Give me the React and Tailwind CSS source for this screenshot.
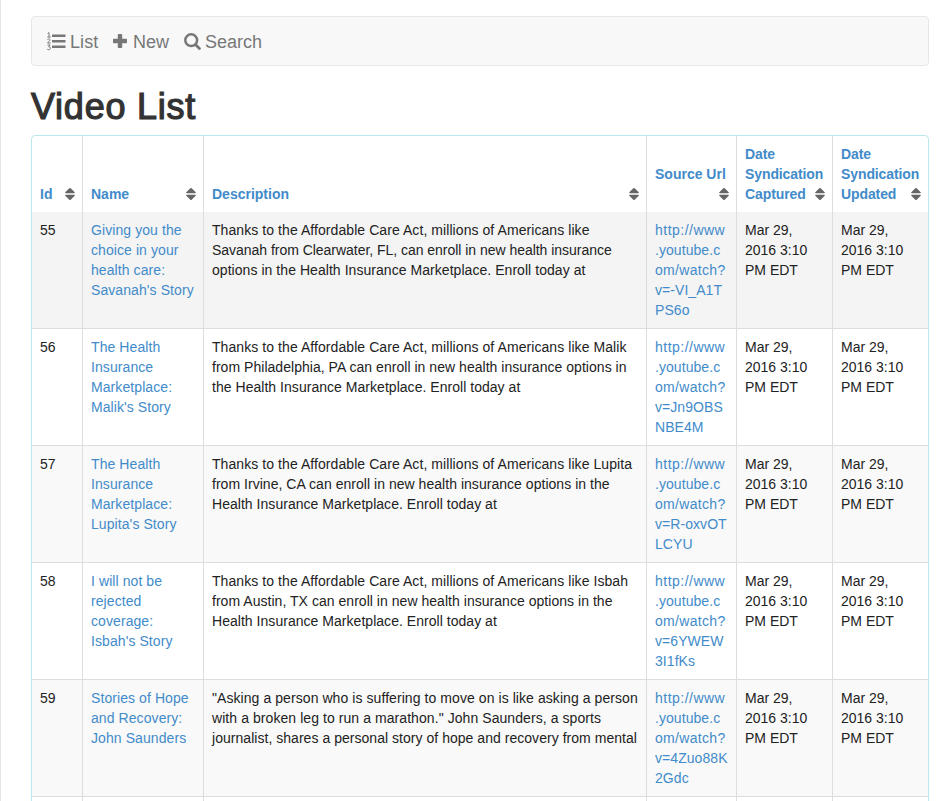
import React from "react";

const THANKS = "Thanks to the Affordable Care Act, millions of Americans like";

const columns = [
  { lines: ["Id"] },
  { lines: ["Name"] },
  { lines: ["Description"] },
  { lines: ["Source Url", "\u00a0"] },
  { lines: ["Date", "Syndication", "Captured"], tight: true },
  { lines: ["Date", "Syndication", "Updated"], tight: true },
];

const wide = "tracking-[0.07px]";
const normal = "tracking-[0.035px]";
const tight = "tracking-[-0.03px]";

const rows = [
  {
    id: "55",
    name: ["Giving you the", "choice in your", "health care:", "Savanah's Story"],
    description: [
      [THANKS, wide],
      ["Savanah from Clearwater, FL, can enroll in new health insurance", tight],
      ["options in the Health Insurance Marketplace. Enroll today at", "tracking-[0.05px]"],
    ],
    url: [".youtube.c", "om/watch?", "v=-VI_A1T", "PS6o"],
    bg: "bg-[#f4f4f4]",
  },
  {
    id: "56",
    name: ["The Health", "Insurance", "Marketplace:", "Malik's Story"],
    description: [
      [THANKS + " Malik", wide],
      ["from Philadelphia, PA can enroll in new health insurance options in", normal],
      ["the Health Insurance Marketplace. Enroll today at", normal],
    ],
    url: [".youtube.c", "om/watch?", "v=Jn9OBS", "NBE4M"],
    bg: "bg-white",
  },
  {
    id: "57",
    name: ["The Health", "Insurance", "Marketplace:", "Lupita's Story"],
    description: [
      [THANKS + " Lupita", wide],
      ["from Irvine, CA can enroll in new health insurance options in the", normal],
      ["Health Insurance Marketplace. Enroll today at", normal],
    ],
    url: [".youtube.c", "om/watch?", "v=R-oxvOT", "LCYU"],
    bg: "bg-[#f9f9f9]",
  },
  {
    id: "58",
    name: ["I will not be", "rejected", "coverage:", "Isbah's Story"],
    description: [
      [THANKS + " Isbah", wide],
      ["from Austin, TX can enroll in new health insurance options in the", normal],
      ["Health Insurance Marketplace. Enroll today at", normal],
    ],
    url: [".youtube.c", "om/watch?", "v=6YWEW", "3I1fKs"],
    bg: "bg-white",
  },
  {
    id: "59",
    name: ["Stories of Hope", "and Recovery:", "John Saunders"],
    description: [
      ["\"Asking a person who is suffering to move on is like asking a person", wide],
      ["with a broken leg to run a marathon.\" John Saunders, a sports", wide],
      ["journalist, shares a personal story of hope and recovery from mental", normal],
    ],
    url: [".youtube.c", "om/watch?", "v=4Zuo88K", "2Gdc"],
    bg: "bg-[#f9f9f9]",
  },
];

const date = ["Mar 29,", "2016 3:10", "PM EDT"];

const grid = "grid grid-cols-[51px_121px_443px_90px_96px_95px]";

function urlLines(url) {
  return [
    ["http://www", "tracking-[0.48px]"],
    ...url.map((line) => [line, line === "om/watch?" ? "tracking-[0.32px]" : "tracking-[0.06px]"]),
  ];
}

function ListIcon() {
  return (
    <svg className="block h-[19px] w-[19px]" viewBox="0 0 19 19" fill="#777">
      <path d="M5 2.500h13.500v2.500H5zM5 8h13.500v2.500H5zM5 13.500h13.500V16H5z" />
      <g fill="none" stroke="#777" strokeWidth="1">
        <path d="M.6 1.500 2 .6v4.400M.3 5h3.400" />
        <path d="M.4 7.500c1.100-1 3-.6 2.700.6C2.900 9.100.9 9.800.6 11h3" />
        <path d="M.5 13h2.600l-1.400 1.800c2.500-.1 2.200 3.100 0 2.900-.6 0-1.100-.2-1.500-.5" />
      </g>
    </svg>
  );
}

function PlusIcon() {
  return (
    <svg className="block h-[14px] w-[14px]" viewBox="0 0 14 14" fill="#777">
      <path d="M5.600 0h2.800q.8 0 .8.800v4h4q.8 0 .8.800v2.800q0 .8-.8.800h-4v4q0 .8-.8.800H5.600q-.8 0-.8-.8v-4h-4Q0 9.200 0 8.400V5.600q0-.8.800-.8h4v-4Q4.800 0 5.600 0z" />
    </svg>
  );
}

function SearchIcon() {
  return (
    <svg className="block h-[17px] w-[17px]" viewBox="0 0 17 17" fill="none" stroke="#777">
      <circle cx="7.200" cy="7.200" r="5.900" strokeWidth="2.500" />
      <path d="m11.700 11.700 3.700 3.700" strokeWidth="2.800" strokeLinecap="round" />
    </svg>
  );
}

function SortIcon() {
  return (
    <svg className="block h-[12px] w-[10px]" viewBox="0 0 10 12" fill="#666">
      <path d="M5.700.300 9.700 4.200Q10.200 5.200 9.200 5.300H.8Q-.2 5.200.3 4.200L4.300.300Q5-.2 5.700.300zM.8 6.700h8.400q1 .1.500 1.100L5.700 11.700q-.7.500-1.400 0L.3 7.800Q-.2 6.800.8 6.700z" />
    </svg>
  );
}

function Lines({ lines, className }) {
  return (
    <div className={className}>
      {lines.map((line, i) =>
        Array.isArray(line) ? (
          <div key={i} className={"whitespace-nowrap " + line[1]}>{line[0]}</div>
        ) : (
          <div key={i} className="whitespace-nowrap">{line}</div>
        )
      )}
    </div>
  );
}

function HeaderCell({ column, last }) {
  return (
    <div className={"flex items-end justify-between p-2 pr-[7px] font-bold text-[#428bca] " + (last ? "" : "border-r border-[#ddd]")}>
      <Lines lines={column.lines} className={column.tight ? "w-0 tracking-[-0.1px]" : "w-0"} />
      <div className="pb-[4px]"><SortIcon /></div>
    </div>
  );
}

function Row({ row }) {
  const cell = "border-b border-r border-[#ddd] p-2";
  return (
    <div className={grid + " h-[117px] " + row.bg}>
      <div className={cell}>{row.id}</div>
      <Lines lines={row.name} className={cell + " tracking-[0.08px] text-[#428bca]"} />
      <Lines lines={row.description} className={cell} />
      <Lines lines={urlLines(row.url)} className={cell + " text-[#428bca]"} />
      <Lines lines={date} className={cell} />
      <Lines lines={date} className="border-b border-[#ddd] p-2" />
    </div>
  );
}

export default function App() {
  return (
    <div className="h-[801px] w-[943px] overflow-hidden border-l border-[#e4e4e4] bg-white pl-[30px] pt-4 font-['Liberation_Sans',Arial,sans-serif] text-[14px] leading-5 text-[#222]">
      <nav className="flex h-[50px] w-[898px] items-center rounded border border-[#e7e7e7] bg-[#f8f8f8] pl-[15px] text-[18px] text-[#777]">
        <a className="flex w-[66px] items-center gap-[4px]"><ListIcon /><span className="pt-[2px] tracking-[0.1px]">List</span></a>
        <a className="flex w-[71px] items-center gap-[6px]"><PlusIcon /><span className="pt-[2px]">New</span></a>
        <a className="flex items-center gap-[4px]"><SearchIcon /><span className="pt-[2px]">Search</span></a>
      </nav>
      <h1 className="mt-[21px] h-[48px] text-[36px] font-normal leading-[40px] tracking-[0.75px] text-[#333] [-webkit-text-stroke:1.2px_#333]">Video List</h1>
      <div className="h-[680px] w-[898px] overflow-hidden rounded border border-[#bce8f1]">
        <div className={grid + " h-[76px]"}>
          {columns.map((column, i) => (
            <HeaderCell key={i} column={column} last={i === columns.length - 1} />
          ))}
        </div>
        {rows.map((row) => <Row key={row.id} row={row} />)}
        <div className={grid + " h-[20px]"}>
          {[0, 1, 2, 3, 4].map((i) => <div key={i} className="border-r border-[#ddd]" />)}
        </div>
      </div>
    </div>
  );
}
